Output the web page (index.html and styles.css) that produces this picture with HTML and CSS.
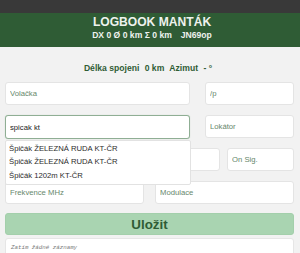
FILE: index.html
```html
<!DOCTYPE html>
<html lang="cs">
<head>
<meta charset="utf-8">
<title>Logbook</title>
<link rel="stylesheet" href="styles.css">
</head>
<body>
<div class="topbar"></div>
<header class="hdr">
  <h1 class="title">LOGBOOK MANTÁK</h1>
  <div class="sub"><span>DX 0 Ø 0 km Σ 0 km</span><span class="loc">JN69op</span></div>
</header>
<main class="main">
  <p class="dist">Délka spojeni <span class="val">0 km</span> Azimut <span class="val">- °</span></p>
  <div class="rows">
    <div class="row r1">
      <input class="inp" placeholder="Volačka">
      <input class="inp" placeholder="/p">
    </div>
    <div class="row r1">
      <div class="ac">
        <input class="inp focus" value="spicak kt">
        <ul class="dropdown">
          <li>Špičák ŽELEZNÁ RUDA KT-ČR</li>
          <li>Špičák ŽELEZNÁ RUDA KT-ČR</li>
          <li>Špičák 1202m KT-ČR</li>
        </ul>
      </div>
      <input class="inp" placeholder="Lokátor">
    </div>
    <div class="row r3">
      <input class="inp" placeholder="RST">
      <input class="inp" placeholder="RST">
      <input class="inp" placeholder="Od Sig.">
      <input class="inp" placeholder="On Sig.">
    </div>
    <div class="row r4">
      <input class="inp" placeholder="Frekvence MHz">
      <input class="inp" placeholder="Modulace">
    </div>
  </div>
  <button class="save">Uložit</button>
  <div class="log">Zatím žádné záznamy</div>
</main>
</body>
</html>
```
FILE: styles.css
```css
html, body {
  margin: 0;
  padding: 0;
  background: #f2f2f2;
  font-family: "Liberation Sans", Arial, sans-serif;
  overflow: hidden;
}
.topbar {
  height: 13px;
  background: #393939;
}
.hdr {
  background: #2f5c35;
  color: #eef2ee;
  text-align: center;
  padding: 2px 0 5px 4px;
}
.title {
  margin: 0;
  font-size: 12.1px;
  line-height: 14px;
  font-weight: bold;
}
.sub {
  font-size: 8.6px;
  line-height: 13px;
  font-weight: bold;
}
.loc {
  margin-left: 9px;
}
.main {
  padding: 15px 6px 0 5px;
}
.dist {
  margin: 0 0 8px 0;
  text-align: center;
  font-size: 8.6px;
  line-height: 12px;
  font-weight: bold;
  color: #2f5c35;
}
.dist .val {
  margin: 0 3px;
}
.rows {
  display: flex;
  flex-direction: column;
  gap: 10px;
}
.row {
  display: grid;
  height: 23px;
}
.r1 {
  grid-template-columns: 185px 89px;
  column-gap: 15px;
}
.r3 {
  grid-template-columns: repeat(4, 67px);
  column-gap: 7px;
}
.r4 {
  grid-template-columns: 139px 139px;
  column-gap: 11px;
}
.inp {
  box-sizing: border-box;
  width: 100%;
  height: 23px;
  margin: 0;
  padding: 0 4px;
  border: 1px solid #e4e4e4;
  border-radius: 3px;
  background: #fff;
  font-family: "Liberation Sans", Arial, sans-serif;
  font-size: 7.7px;
  color: #222;
  outline: none;
}
.inp::placeholder {
  color: #66876b;
  opacity: 1;
}
.ac {
  position: relative;
}
.focus {
  height: 24px;
  border-color: #8fae94;
  box-shadow: 0 0 1px #b5cdb8;
}
.dropdown {
  position: absolute;
  top: 25px;
  left: 0;
  z-index: 5;
  box-sizing: border-box;
  width: 186px;
  margin: 0;
  padding: 1px 0 2px 0;
  list-style: none;
  background: #fff;
  border: 1px solid #e2e2e2;
  border-radius: 2px;
}
.dropdown li {
  padding: 0 3px;
  font-size: 7.7px;
  line-height: 13.3px;
  color: #2c2c2c;
}
.save {
  display: block;
  box-sizing: border-box;
  width: 100%;
  height: 22px;
  margin: 9px 0 0 0;
  padding: 0;
  border: 1px solid #a3cfab;
  border-radius: 3px;
  background: #a9d4b1;
  color: #2f5c35;
  font-family: "Liberation Sans", Arial, sans-serif;
  font-size: 13.4px;
  font-weight: bold;
}
.log {
  box-sizing: border-box;
  margin-top: 3px;
  height: 30px;
  padding: 5px 5px;
  background: #fff;
  border: 1px solid #e6e6e6;
  border-radius: 3px;
  font-family: "Liberation Mono", "DejaVu Sans Mono", monospace;
  font-style: italic;
  font-size: 5.8px;
  color: #7a7a7a;
}
```
